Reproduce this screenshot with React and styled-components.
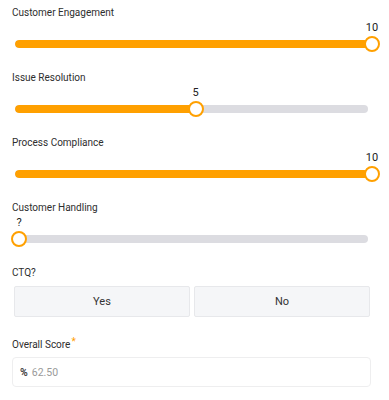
import React from "react";
import styled, { createGlobalStyle } from "styled-components";

const Global = createGlobalStyle`
  html, body { margin: 0; padding: 0; background: #fff; }
  body { font-family: Roboto, "Noto Sans", Arial, sans-serif; color: #333; }
`;

const ORANGE = "#ffa000";

const Page = styled.div`
  width: 389px;
  padding: 6px 0 0 12px;
  box-sizing: border-box;
  display: flex;
  flex-direction: column;
`;

const Group = styled.div`
  height: 65px;
  display: flex;
  flex-direction: column;
`;

const Label = styled.div`
  font-size: 10px;
  line-height: 14px;
  color: #2e2e2e;
  height: 14px;
`;

const SliderArea = styled.div`
  position: relative;
  height: 36px;
  margin-left: 3px;
  width: 353px;
`;

const Track = styled.div`
  position: absolute;
  left: 0;
  right: 0;
  top: 20px;
  height: 8px;
  border-radius: 4px;
  background: #dcdce1;
  overflow: hidden;
`;

const Fill = styled.div`
  height: 100%;
  background: ${ORANGE};
  border-radius: 4px;
`;

const Thumb = styled.div`
  position: absolute;
  top: 16px;
  width: 16px;
  height: 16px;
  margin-left: -8px;
  box-sizing: border-box;
  border: 2px solid ${ORANGE};
  border-radius: 50%;
  background: #fff;
`;

const ValueText = styled.div`
  position: absolute;
  top: 1px;
  width: 30px;
  margin-left: -15px;
  text-align: center;
  font-size: 11px;
  line-height: 14px;
  color: #222;
`;

const Section = styled.div`
  display: flex;
  flex-direction: column;
  margin-top: ${(p) => p.$gap || 0}px;
`;

const ButtonRow = styled.div`
  display: flex;
  gap: 4px;
  margin: 6px 0 0 2px;
  width: 356px;
`;

const Choice = styled.button`
  flex: 1;
  height: 31px;
  background: #f5f6f8;
  border: 1px solid #e7e8eb;
  border-radius: 2px;
  font-family: inherit;
  font-size: 11px;
  color: #333;
  padding: 0;
`;

const Required = styled.span`
  color: ${ORANGE};
  font-size: 10px;
  position: relative;
  top: -3px;
  line-height: 10px;
  margin-left: 1px;
`;

const InputBox = styled.div`
  margin-top: 5px;
  width: 359px;
  height: 30px;
  box-sizing: border-box;
  border: 1px solid #eeeeef;
  border-radius: 4px;
  display: flex;
  align-items: center;
  padding-left: 7px;
  gap: 4px;
  font-size: 10.5px;
`;

const Prefix = styled.span`
  font-weight: 700;
  color: #444;
`;

const Placeholder = styled.span`
  color: #9a9a9a;
`;

const sliders = [
  { label: "Customer Engagement", value: 10 },
  { label: "Issue Resolution", value: 5 },
  { label: "Process Compliance", value: 10 },
  { label: "Customer Handling", value: null },
];

function Slider({ label, value }) {
  const frac = value == null ? 0 : value / 10;
  const left = 4 + frac * 353;
  return (
    <Group>
      <Label>{label}</Label>
      <SliderArea>
        <Track>
          <Fill style={{ width: `${left}px` }} />
        </Track>
        <ValueText style={{ left: `${left}px` }}>{value == null ? "?" : value}</ValueText>
        <Thumb style={{ left: `${left}px` }} />
      </SliderArea>
    </Group>
  );
}

export default function App() {
  return (
    <>
      <Global />
      <Page>
        {sliders.map((s) => (
          <Slider key={s.label} {...s} />
        ))}
        <Section>
          <Label>CTQ?</Label>
          <ButtonRow>
            <Choice>Yes</Choice>
            <Choice>No</Choice>
          </ButtonRow>
        </Section>
        <Section $gap={21}>
          <Label>
            Overall Score<Required>*</Required>
          </Label>
          <InputBox>
            <Prefix>%</Prefix>
            <Placeholder>62.50</Placeholder>
          </InputBox>
        </Section>
      </Page>
    </>
  );
}
